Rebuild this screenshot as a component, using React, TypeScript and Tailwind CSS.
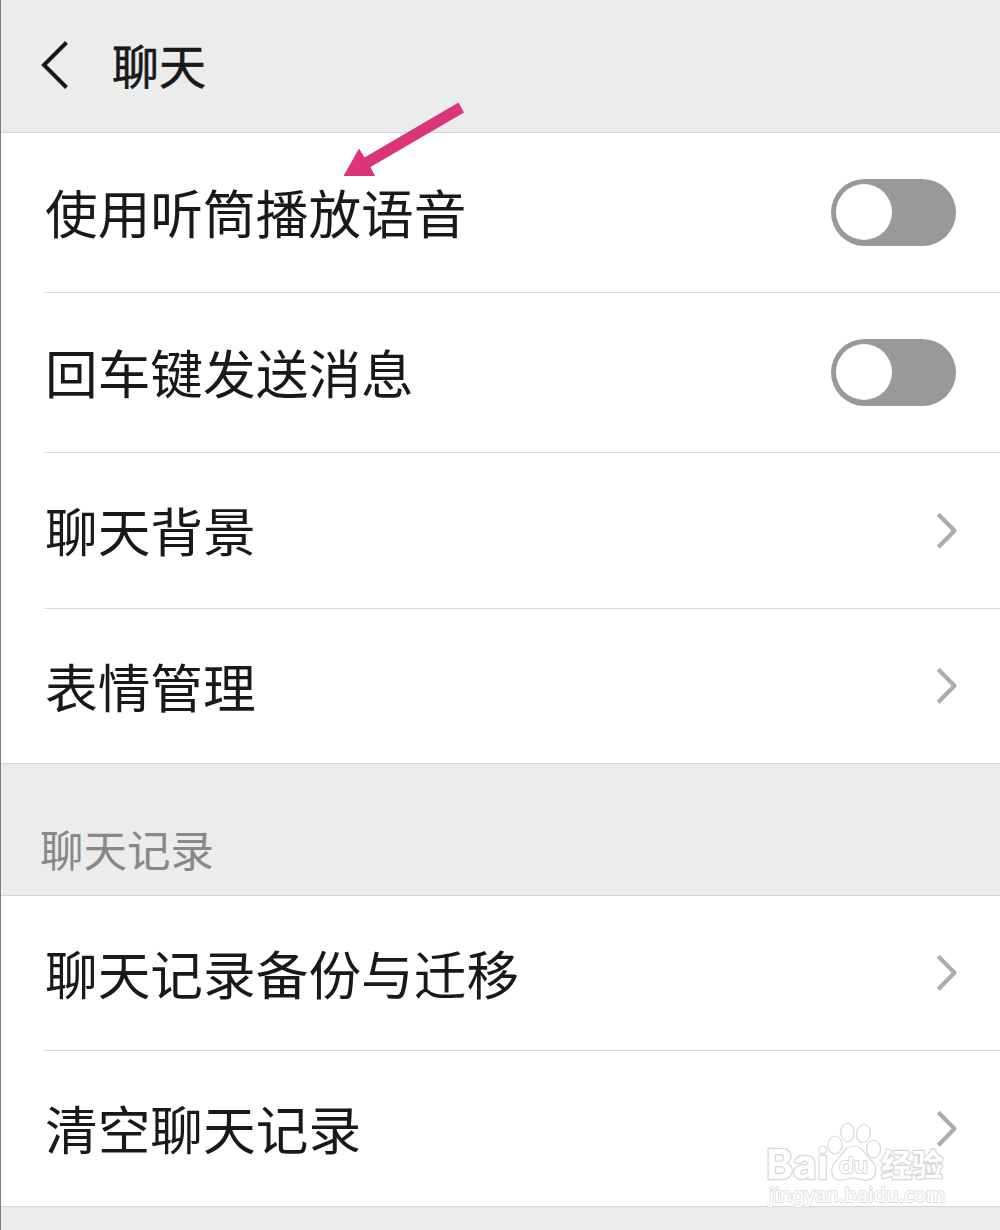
import { ReactNode } from 'react';

const chatRows = [
  { label: '使用听筒播放语音', type: 'switch', height: 'h-[160px]' },
  { label: '回车键发送消息', type: 'switch', height: 'h-[160px]' },
  { label: '聊天背景', type: 'link', height: 'h-[156px]' },
  { label: '表情管理', type: 'link', height: 'h-[154px]' }
];

const historyRows = [
  { label: '聊天记录备份与迁移', type: 'link', height: 'h-[155px]' },
  { label: '清空聊天记录', type: 'link', height: 'h-[155px]' }
];

function Toggle() {
  return (
    <button role="switch" aria-checked="false" className="mr-[44px] mb-px flex h-[67px] w-[125px] items-center rounded-full bg-[#999999] pl-[5px]">
      <span className="h-[56px] w-[56px] rounded-full bg-white" />
    </button>
  );
}

function Chevron() {
  return (
    <svg className="mr-[40px] h-[40px] w-[26px]" viewBox="0 0 26 40" fill="none" stroke="#acacac" strokeWidth="4.2" strokeLinejoin="round">
      <path d="M4.2 3.2 L20.5 19.8 L4.2 36.2" />
    </svg>
  );
}

function Row({ label, height, last, children }: { label: string; height: string; last: boolean; children: ReactNode }) {
  return (
    <div className={`${height} ${last ? '' : 'border-b border-[#dadada]'} flex items-center justify-between`}>
      <span className="pb-[2px] pl-px text-[52.7px] leading-none">{label}</span>
      {children}
    </div>
  );
}

function RowList({ rows }: { rows: typeof chatRows }) {
  return (
    <div className="border-b border-[#d5d5d5] bg-white pl-[43px]">
      {rows.map((row, index) => (
        <Row key={row.label} label={row.label} height={row.height} last={index === rows.length - 1}>
          {row.type === 'switch' ? <Toggle /> : <Chevron />}
        </Row>
      ))}
    </div>
  );
}

function Arrow() {
  return (
    <svg className="absolute left-[339px] top-[98px] h-[84px] w-[130px]" viewBox="340 98 130 84">
      <path d="M458.5 102.5 L464 112.5 L370.5 167 L375 176 L343.5 176 L359 148.5 L364.5 157.5 Z" fill="#dc3577" />
    </svg>
  );
}

function Watermark() {
  return (
    <svg className="absolute left-[759px] top-[1115px] h-[95px] w-[195px]" viewBox="760 1115 195 95" fill="white" stroke="#d6d6d6" strokeWidth="1.1" strokeLinejoin="round">
      <g fontWeight="700" strokeWidth="2.4" paintOrder="stroke">
        <text x="766" y="1179" fontSize="41" fontFamily="Inter, sans-serif" textLength="62" lengthAdjust="spacingAndGlyphs">Bai</text>
        <text x="881" y="1176" fontSize="31" textLength="62" fontFamily="'Noto Sans CJK SC', sans-serif">经验</text>
      </g>
      <ellipse cx="835" cy="1145" rx="7" ry="9" />
      <ellipse cx="847.5" cy="1132.5" rx="6.8" ry="9.2" />
      <ellipse cx="863.5" cy="1133.5" rx="7" ry="9" transform="rotate(12 863.5 1133.5)" />
      <ellipse cx="873.5" cy="1149" rx="7" ry="8.8" />
      <path d="M854 1146 C862 1146 865 1154 870 1159 C878 1166 878 1178 868 1180 C861 1181 858 1178 854 1178 C849 1178 845 1181 839 1180 C829 1178 830 1166 837 1160 C843 1154 845 1146 854 1146 Z" />
      <text x="839" y="1173" fontSize="22" fontFamily="Inter, sans-serif" fontWeight="500" textLength="29" lengthAdjust="spacingAndGlyphs" strokeWidth="1.8" paintOrder="stroke">du</text>
      <text x="769" y="1202" fontSize="20" fontFamily="'Noto Sans', sans-serif" textLength="176" lengthAdjust="spacingAndGlyphs" strokeWidth="2" paintOrder="stroke" stroke="#dfdfdf">jingyan.baidu.com</text>
    </svg>
  );
}

export default function App() {
  return (
    <div className="relative h-[1230px] w-[1000px] overflow-hidden border-l border-[#808080] bg-[#ececec] font-['Noto_Sans_CJK_SC',sans-serif] text-[#191919]">
      <header className="flex h-[133px] items-center border-b border-[#d5d5d5] pl-[38px]">
        <svg className="mb-[2px] h-[52px] w-[32px]" viewBox="0 0 32 52" fill="none" stroke="#191919" strokeWidth="4">
          <path d="M27.5 3.5 L5 26 L27.5 48.5" />
        </svg>
        <h1 className="mb-[5px] pl-[41px] text-[47px] leading-none [-webkit-text-stroke:0.6px_#191919]">聊天</h1>
      </header>

      <RowList rows={chatRows} />

      {/* Chat history */}
      <h2 className="flex h-[132px] items-end border-b border-[#d5d5d5] pb-[25px] pl-[39px] text-[43.5px] leading-none text-[#888888]">
        聊天记录
      </h2>
      <RowList rows={historyRows} />

      <Arrow />
      <Watermark />
    </div>
  );
}
